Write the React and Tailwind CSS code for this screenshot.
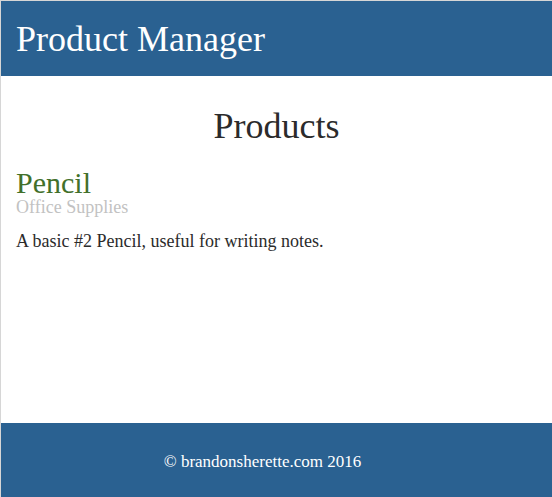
export default function App() {
  return (
    <div
      className="min-h-[497px] flex flex-col border-t border-l border-[#d6d6d6] bg-white text-[#333]"
      style={{ fontFamily: '"Liberation Serif", "Times New Roman", serif' }}
    >
      <header className="h-[75px] bg-[#2a6191] pl-[15px] pt-[18px]">
        <h1 className="text-[36px] leading-[41px] text-white font-normal">Product Manager</h1>
      </header>
      <main className="flex-1 pl-[15px] pt-[30px]">
        <h2 className="text-center text-[36px] leading-[41px] text-[#2b2b2b] pr-[15px]">Products</h2>
        <div className="mt-[21px] text-[30px] leading-[30px] text-[#42702a]">Pencil</div>
        <div className="text-[18px] leading-[18px] text-[#c2c2c2]">Office Supplies</div>
        <p className="mt-[16px] text-[18px] leading-[18px] text-[#2b2b2b]">
          A basic #2 Pencil, useful for writing notes.
        </p>
      </main>
      <footer className="h-[74px] bg-[#2a6191] pt-[27px] pr-[28px] text-center">
        <span className="text-[17px] leading-[20px] text-white">© brandonsherette.com 2016</span>
      </footer>
    </div>
  );
}
